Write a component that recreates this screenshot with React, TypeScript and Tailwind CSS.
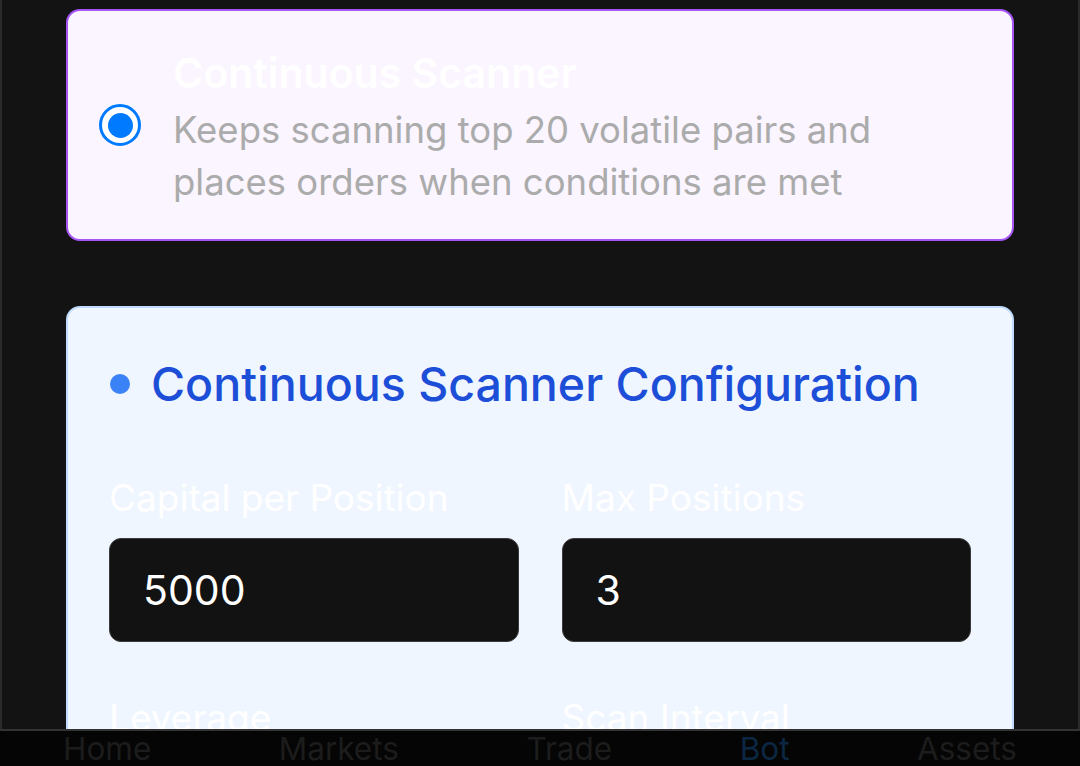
const FIELDS = [
  { label: "Capital per Position", value: "5000" },
  { label: "Max Positions", value: "3" },
  { label: "Leverage", value: "10" },
  { label: "Scan Interval", value: "60" },
];

const NAV = ["Home", "Markets", "Trade", "Bot", "Assets"];

const App = () => {
  return (
    <div className="h-[766px] flex flex-col overflow-hidden bg-[#131313] font-['Inter',sans-serif]">
      {/* Scroll area */}
      <div className="flex-1 min-h-0 overflow-hidden border-x-2 border-[#2a2a2a] px-[64px] pt-[9px]">
        {/* Mode option */}
        <div className="flex items-center gap-[32px] rounded-[14px] border-2 border-[#a855f7] bg-[#faf5ff] pl-[31px] pr-[32px] pt-[37px] pb-[31px]">
          <div className="-mt-[6px] w-[42px] h-[42px] shrink-0 rounded-full border-[3px] border-[#007aff] bg-white flex items-center justify-center">
            <div className="w-[25px] h-[25px] rounded-full bg-[#007aff]" />
          </div>
          <div className="flex flex-col">
            <p className="text-[41px] leading-[50px] font-semibold text-white mb-[6px]">Continuous Scanner</p>
            <p className="text-[36.5px] leading-[52px] text-[#ababab]">
              Keeps scanning top 20 volatile pairs and
              <br />
              places orders when conditions are met
            </p>
          </div>
        </div>

        {/* Config card */}
        <div className="mt-[65px] rounded-[14px] border-2 border-[#bfdbfe] bg-[#eff6ff] px-[41px] pt-[48px] pb-[48px]">
          <div className="flex items-center gap-[21px] mb-[64px]">
            <div className="w-[20px] h-[20px] rounded-full bg-[#3b82f6] ml-[1px]" />
            <h2 className="text-[46.5px] leading-[56px] font-medium text-[#1d4ed8]">Continuous Scanner Configuration</h2>
          </div>
          <div className="grid grid-cols-2 gap-x-[43px] gap-y-[54px]">
            {FIELDS.map((f) => (
              <div key={f.label} className="flex flex-col">
                <label className="text-[37px] leading-[44px] text-white mb-[18px]">{f.label}</label>
                <div className="h-[104px] rounded-[12px] border border-[#3a3a3a] bg-[#121212] flex items-center px-[33px]">
                  <span className="text-[41px] leading-none text-white">{f.value}</span>
                </div>
              </div>
            ))}
          </div>
        </div>
      </div>

      {/* Bottom tabs */}
      <div className="h-[37px] shrink-0 overflow-hidden border-t-2 border-[#333] bg-[#050505] flex justify-between px-[63px] pt-[2px]">
        {NAV.map((n) => (
          <span
            key={n}
            className={`text-[31.5px] leading-none ${n === "Bot" ? "text-[#0b2742]" : "text-[#1c1c1c]"}`}
          >
            {n}
          </span>
        ))}
      </div>
    </div>
  );
};

export default App;
